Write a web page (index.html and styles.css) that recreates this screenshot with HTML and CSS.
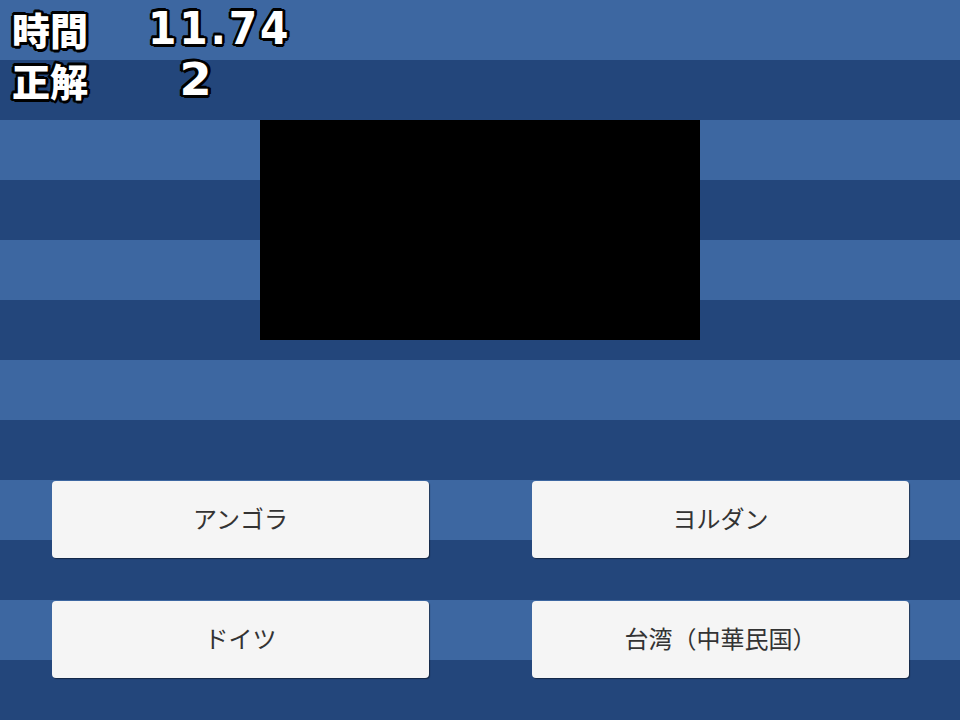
FILE: index.html
```html
<!DOCTYPE html>
<html lang="ja">
<head>
<meta charset="utf-8">
<title>Quiz</title>
<link rel="stylesheet" href="styles.css">
</head>
<body>
<div class="screen">
  <header class="hud">
    <div class="hud-row">
      <span class="hud-label">時間</span>
      <span class="hud-value">11.74</span>
    </div>
    <div class="hud-row">
      <span class="hud-label">正解</span>
      <span class="hud-value hud-value-count">2</span>
    </div>
  </header>
  <div class="picture"></div>
  <div class="choices">
    <button class="choice">アンゴラ</button>
    <button class="choice">ヨルダン</button>
    <button class="choice">ドイツ</button>
    <button class="choice">台湾（中華民国）</button>
  </div>
</div>
</body>
</html>
```
FILE: styles.css
```css
html, body {
  margin: 0;
  padding: 0;
}
body {
  width: 960px;
  height: 720px;
  overflow: hidden;
  background: repeating-linear-gradient(to bottom, #3d67a1 0, #3d67a1 60px, #23467b 60px, #23467b 120px);
  font-family: "Noto Sans CJK JP", "Noto Sans", sans-serif;
}
.screen {
  display: flex;
  flex-direction: column;
  height: 720px;
}
.hud {
  height: 120px;
  box-sizing: border-box;
  padding: 3px 0 0 12px;
  display: flex;
  flex-direction: column;
}
.hud-row {
  height: 51px;
  display: flex;
  align-items: center;
  color: #fff;
  text-shadow:
    -2px -2px 0 #000, 0 -2px 0 #000, 2px -2px 0 #000,
    -2px 0 0 #000, 2px 0 0 #000,
    -2px 2px 0 #000, 0 2px 0 #000, 2px 2px 0 #000,
    -1px -3px 0 #000, 1px 3px 0 #000, -3px 1px 0 #000, 3px -1px 0 #000;
}
.hud-label {
  font-family: "Noto Sans CJK JP", sans-serif;
  font-weight: 900;
  font-size: 38px;
  line-height: 51px;
  width: 136px;
}
.hud-value {
  font-family: "DejaVu Sans", sans-serif;
  font-weight: bold;
  font-size: 44px;
  line-height: 53px;
  letter-spacing: 3px;
  transform: scaleX(0.93);
  transform-origin: left center;
}
.hud-value-count {
  padding-left: 30px;
  transform: scaleX(1.05);
}
.picture {
  width: 440px;
  height: 220px;
  margin-left: 260px;
  background: #000;
}
.choices {
  margin-top: 141px;
  margin-left: 52px;
  display: grid;
  grid-template-columns: 377px 377px;
  grid-auto-rows: 77px;
  column-gap: 103px;
  row-gap: 43px;
}
.choice {
  border: none;
  border-radius: 4px;
  background: #f5f5f5;
  box-shadow: 1px 1px 1px rgba(0, 0, 0, 0.45);
  font-family: "Noto Sans CJK JP", sans-serif;
  font-weight: 400;
  font-size: 24px;
  color: #333;
  padding: 0 0 4px 0;
  margin: 0;
}
```
